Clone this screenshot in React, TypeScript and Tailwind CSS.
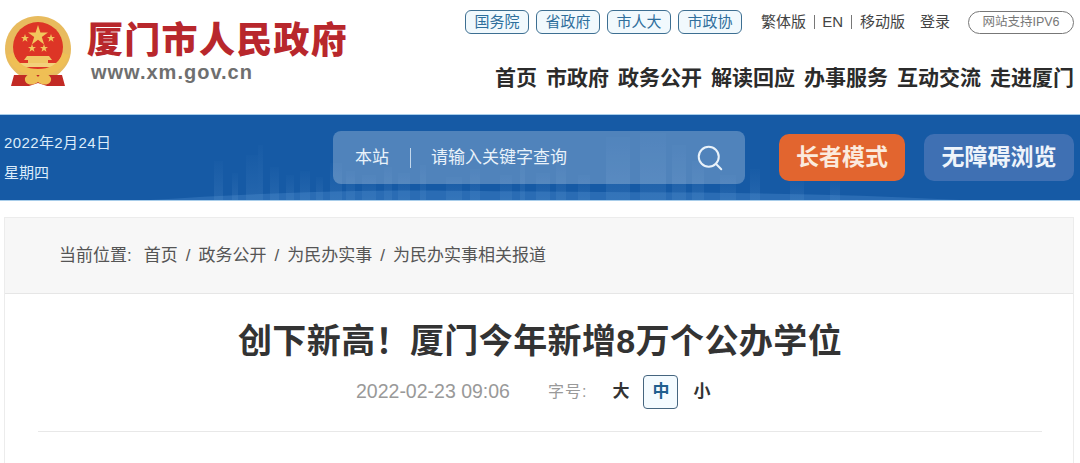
import { Search } from "lucide-react";

const CJK = "font-['Liberation_Sans','Noto_Sans_CJK_SC',sans-serif]";

const govLinks = ["国务院", "省政府", "市人大", "市政协"];
const navItems = ["首页", "市政府", "政务公开", "解读回应", "办事服务", "互动交流", "走进厦门"];
const crumbs = ["首页", "政务公开", "为民办实事", "为民办实事相关报道"];

// x, top y, width of the faint buildings behind the search box
const towers = [
  [214, 46, 9], [232, 58, 6], [246, 40, 12], [258, 30, 5], [270, 52, 9], [286, 60, 8],
  [300, 56, 10], [316, 62, 7], [330, 48, 12], [346, 56, 9], [362, 60, 14], [384, 52, 8],
  [398, 58, 12], [420, 50, 6], [446, 62, 16], [470, 54, 10], [500, 60, 12], [520, 40, 5],
  [536, 58, 14], [556, 48, 10], [578, 60, 12], [606, 22, 24], [640, 18, 26], [672, 30, 14],
  [692, 46, 12], [720, 60, 16], [750, 54, 10], [790, 64, 14], [830, 66, 10],
];

function Emblem() {
  return (
    <svg width="70" height="74" viewBox="0 0 70 74" className="shrink-0">
      <path d="M35 1 C54 1 68 16 68 34 C68 46 62 54 54 60 H16 C8 54 2 46 2 34 C2 16 16 1 35 1 Z" fill="#e8bb5e" />
      <circle cx="35" cy="32" r="25" fill="#dd3526" />
      <polygon points="35,10 37.4,17.4 45,17.4 38.8,22 41.2,29.4 35,24.8 28.8,29.4 31.2,22 25,17.4 32.6,17.4" fill="#f2c65c" />
      <polygon points="22,19 23,22 26,22 23.6,23.8 24.5,26.8 22,25 19.5,26.8 20.4,23.8 18,22 21,22" fill="#f2c65c" />
      <polygon points="48,19 49,22 52,22 49.6,23.8 50.5,26.8 48,25 45.5,26.8 46.4,23.8 44,22 47,22" fill="#f2c65c" />
      <polygon points="29,29 30,32 33,32 30.6,33.8 31.5,36.8 29,35 26.5,36.8 27.4,33.8 25,32 28,32" fill="#f2c65c" />
      <polygon points="41,29 42,32 45,32 42.6,33.8 43.5,36.8 41,35 38.5,36.8 39.4,33.8 37,32 40,32" fill="#f2c65c" />
      <path d="M24 41 H46 L49 45 H45 V48 H25 V45 H21 Z" fill="#f0c766" />
      <rect x="15" y="48" width="40" height="4" fill="#f3d07a" />
      <path d="M11 60 H59 L62 71 H44 L35 68 L26 71 H8 Z" fill="#c22a25" />
      <path d="M4 40 C9 56 22 60 35 60 C48 60 61 56 66 40 L60 38 C55 50 46 54 35 54 C24 54 15 50 10 38 Z" fill="#efbf55" />
      <path d="M22 63 C26 57 31 57 35 62 C39 57 44 57 48 63 C49 69 42 72 35 67 C28 72 21 69 22 63 Z" fill="#efbf55" />
    </svg>
  );
}

function Skyline() {
  return (
    <svg
      viewBox="0 0 1080 85"
      width="1080"
      height="85"
      className="absolute inset-0 pointer-events-none"
    >
      <defs>
        <linearGradient id="tower" x1="0" y1="0" x2="0" y2="1">
          <stop offset="0" stopColor="#7fb0e2" stopOpacity="0.02" />
          <stop offset="1" stopColor="#7fb0e2" stopOpacity="0.14" />
        </linearGradient>
      </defs>
      {towers.map(([x, y, w]) => (
        <rect key={x} x={x} y={y} width={w} height={85 - y} fill="url(#tower)" />
      ))}
      <path
        d="M150 85 C260 78 360 74 480 76 C640 78 800 76 960 85 Z"
        fill="#5a97d8"
        opacity="0.3"
      />
    </svg>
  );
}

export default function App() {
  return (
    <div className={`${CJK} w-[1080px] h-[463px] overflow-hidden bg-white`}>
      {/* top header */}
      <header className="flex h-[114px] items-start">
        <div className="flex pl-[3px] pt-[15px]">
          <Emblem />
          <div className="ml-[14px] flex flex-col">
            <div className="text-[36px] leading-[44px] font-black tracking-[1.3px] text-[#b8272c] font-['Noto_Sans_CJK_SC',serif]">
              厦门市人民政府
            </div>
            <div className="mt-[1px] ml-[4px] text-[20px] leading-[24px] font-bold tracking-[1px] text-[#6f6f6f]">
              www.xm.gov.cn
            </div>
          </div>
        </div>
        <div className="ml-auto flex flex-col items-end pr-[6px]">
          <div className="mt-[10px] flex h-[24px] items-center">
            <div className="flex gap-[7px]">
              {govLinks.map((t) => (
                <span
                  key={t}
                  className="flex h-[24px] w-[64px] items-center justify-center rounded-[6px] border border-[#3d6f92] bg-[#f1f9fd] text-[15px] text-[#2f6f9c]"
                >
                  {t}
                </span>
              ))}
            </div>
            <span className="ml-[19px] text-[15px] text-[#444]">繁体版</span>
            <span className="mx-[7.5px] h-[14px] w-px bg-[#777]" />
            <span className="text-[15px] text-[#444]">EN</span>
            <span className="mx-[8px] h-[14px] w-px bg-[#777]" />
            <span className="text-[15px] text-[#444]">移动版</span>
            <span className="ml-[15px] text-[15px] text-[#444]">登录</span>
            <span className="ml-[18px] flex h-[23px] w-[106px] items-center justify-center rounded-full border border-[#777] text-[12.5px] text-[#777]">
              网站支持IPV6
            </span>
          </div>
          <nav className="mt-[30px] flex gap-[9px] text-[21px] leading-[28px] font-bold text-[#2b2b2b]">
            {navItems.map((t) => (
              <span key={t}>{t}</span>
            ))}
          </nav>
        </div>
      </header>

      {/* blue banner */}
      <section className="relative flex h-[87px] items-center border-y border-[#a8cdea] bg-[#165aa5]">
        <Skyline />
        <div className="relative flex w-[333px] flex-col gap-[11px] pl-[4px] text-[15px] leading-[19px] text-[#dcecfa]">
          <span className="tracking-[0.4px]">2022年2月24日</span>
          <span>星期四</span>
        </div>
        <div className="relative mb-[1px] flex h-[53px] w-[412px] items-center rounded-[8px] bg-white/25 pl-[22px] pr-[20px] pt-[1px] text-[17px] text-[#e9f2fa]">
          <span>本站</span>
          <span className="ml-[21px] h-[20px] w-px bg-[#c3d8ec]" />
          <span className="ml-[20px]">请输入关键字查询</span>
          <Search className="ml-auto h-[30px] w-[30px] text-[#e9f2fa]" strokeWidth={1.6} />
        </div>
        <div className="relative ml-[34px] flex h-[47px] w-[126px] items-center justify-center rounded-[10px] bg-[#e2652f] text-[23px] font-bold text-[#fbeadd]">
          长者模式
        </div>
        <div className="relative ml-[19px] flex h-[47px] w-[150px] items-center justify-center rounded-[10px] bg-[#3f70b3] text-[23px] font-bold text-[#eef4fb]">
          无障碍浏览
        </div>
      </section>

      {/* article card */}
      <main className="mx-[4px] mt-[16px] h-[260px] w-[1070px] border-x border-t border-[#ececec]">
        <div className="flex h-[76px] items-center border-b border-[#e6e6e6] bg-[#f7f7f7] pl-[54px] text-[17px] text-[#555]">
          <span className="mr-[12px]">当前位置:</span>
          {crumbs.map((c, i) => (
            <span key={c} className="flex items-center">
              {i > 0 && <span className="mx-[8px]">/</span>}
              {c}
            </span>
          ))}
        </div>
        <div className="pl-[33px] pr-[31px]">
          <h1 className="mt-[25px] text-center text-[34px] leading-[44px] font-bold tracking-[0.4px] text-[#333]">
            创下新高！厦门今年新增8万个公办学位
          </h1>
          <div className="mt-[12px] flex h-[34px] items-center pl-[318px]">
            <span className="text-[19.5px] text-[#999]">2022-02-23 09:06</span>
            <span className="ml-[38px] text-[16px] tracking-[1px] text-[#999]">字号:</span>
            <span className="ml-[25px] text-[17px] font-bold text-[#333]">大</span>
            <span className="ml-[14px] flex h-[34px] w-[35px] items-center justify-center rounded-[4px] border border-[#45657f] bg-[#f4fbff] text-[17px] font-bold text-[#1f5f8f]">
              中
            </span>
            <span className="ml-[15px] text-[17px] font-bold text-[#333]">小</span>
          </div>
          <div className="mt-[22px] h-px bg-[#e8e8e8]" />
        </div>
      </main>
    </div>
  );
}
